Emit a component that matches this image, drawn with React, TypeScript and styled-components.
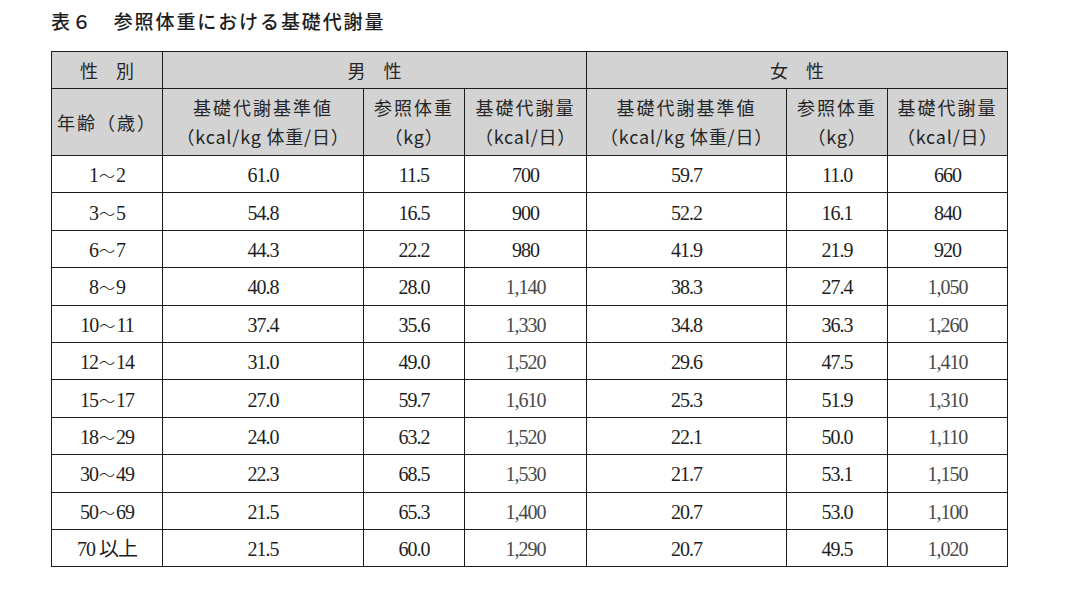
import styled, { createGlobalStyle } from "styled-components"

const GlobalStyle = createGlobalStyle`
    body {
        margin: 0;
        background: #ffffff;
    }
`

const Page = styled.div`
    padding: 9px 0 0 51px;
    font-family: "Noto Sans CJK JP", "Noto Sans", sans-serif;
    color: #222;
`

const Title = styled.h1`
    margin: 0 0 18px 0;
    font-size: 19px;
    line-height: 24px;
    font-weight: 500;
    letter-spacing: 1.9px;
    color: #1e1e1e;
`

const Table = styled.table`
    border-collapse: collapse;
    table-layout: fixed;
    width: 956px;
`

const HeadRow = styled.tr<{ $tall?: boolean }>`
    height: ${(p) => (p.$tall ? "67px" : "37px")};
`

const HeadCell = styled.th`
    box-sizing: border-box;
    background: #d3d3d3;
    border: 1px solid #1c1c1c;
    padding: 0;
    font-size: 18px;
    font-weight: 400;
    text-align: center;
    vertical-align: middle;
    color: #262626;
    line-height: 29px;
`

const Spaced = styled.span`
    letter-spacing: 2px;
`

const Wide = styled.span`
    letter-spacing: 1em;
    margin-right: -1em;
`

const Unit = styled.span`
    display: block;
    letter-spacing: 0.8px;
`

const Row = styled.tr`
    height: 37.4px;
`

const Cell = styled.td<{ $light?: boolean }>`
    box-sizing: border-box;
    border: 1px solid #1c1c1c;
    padding: 2px 0 0 0;
    line-height: 20px;
    text-align: center;
    vertical-align: middle;
    font-family: "Liberation Serif", "Noto Sans CJK JP", serif;
    font-size: 20px;
    letter-spacing: -1px;
    color: ${(p) => (p.$light ? "#4a4a4a" : "#1e1e1e")};
`

const Wave = styled.span`
    font-family: "Noto Sans CJK JP", sans-serif;
    font-size: 16px;
    font-weight: 300;
    letter-spacing: 0;
    margin: 0 1px;
`

const rows: [string, string, string, string, string, string, string][] = [
    ["1～2", "61.0", "11.5", "700", "59.7", "11.0", "660"],
    ["3～5", "54.8", "16.5", "900", "52.2", "16.1", "840"],
    ["6～7", "44.3", "22.2", "980", "41.9", "21.9", "920"],
    ["8～9", "40.8", "28.0", "1,140", "38.3", "27.4", "1,050"],
    ["10～11", "37.4", "35.6", "1,330", "34.8", "36.3", "1,260"],
    ["12～14", "31.0", "49.0", "1,520", "29.6", "47.5", "1,410"],
    ["15～17", "27.0", "59.7", "1,610", "25.3", "51.9", "1,310"],
    ["18～29", "24.0", "63.2", "1,520", "22.1", "50.0", "1,110"],
    ["30～49", "22.3", "68.5", "1,530", "21.7", "53.1", "1,150"],
    ["50～69", "21.5", "65.3", "1,400", "20.7", "53.0", "1,100"],
    ["70 以上", "21.5", "60.0", "1,290", "20.7", "49.5", "1,020"],
]

const Age = ({ text }: { text: string }) => {
    const parts = text.split("～")
    if (parts.length === 1) return <>{text}</>
    return (
        <>
            {parts[0]}
            <Wave>～</Wave>
            {parts[1]}
        </>
    )
}

const SubHeads = () => (
    <>
        <HeadCell>
            <Spaced>基礎代謝基準値</Spaced>
            <Unit>（kcal/kg 体重/日）</Unit>
        </HeadCell>
        <HeadCell>
            <Spaced>参照体重</Spaced>
            <Unit>（kg）</Unit>
        </HeadCell>
        <HeadCell>
            <Spaced>基礎代謝量</Spaced>
            <Unit>（kcal/日）</Unit>
        </HeadCell>
    </>
)

const App = () => {
    return (
        <Page>
            <GlobalStyle />
            <Title>表６　参照体重における基礎代謝量</Title>
            <Table>
                <colgroup>
                    <col style={{ width: 111 }} />
                    <col style={{ width: 201 }} />
                    <col style={{ width: 101 }} />
                    <col style={{ width: 122 }} />
                    <col style={{ width: 200 }} />
                    <col style={{ width: 101 }} />
                    <col style={{ width: 120 }} />
                </colgroup>
                <thead>
                    <HeadRow>
                        <HeadCell>
                            <Wide>性別</Wide>
                        </HeadCell>
                        <HeadCell colSpan={3}>
                            <Wide>男性</Wide>
                        </HeadCell>
                        <HeadCell colSpan={3}>
                            <Wide>女性</Wide>
                        </HeadCell>
                    </HeadRow>
                    <HeadRow $tall>
                        <HeadCell>
                            <Spaced>年齢（歳）</Spaced>
                        </HeadCell>
                        <SubHeads />
                        <SubHeads />
                    </HeadRow>
                </thead>
                <tbody>
                    {rows.map((r) => (
                        <Row key={r[0]}>
                            <Cell>
                                <Age text={r[0]} />
                            </Cell>
                            <Cell>{r[1]}</Cell>
                            <Cell>{r[2]}</Cell>
                            <Cell $light={r[3].includes(",")}>{r[3]}</Cell>
                            <Cell>{r[4]}</Cell>
                            <Cell>{r[5]}</Cell>
                            <Cell $light={r[6].includes(",")}>{r[6]}</Cell>
                        </Row>
                    ))}
                </tbody>
            </Table>
        </Page>
    )
}

export default App
